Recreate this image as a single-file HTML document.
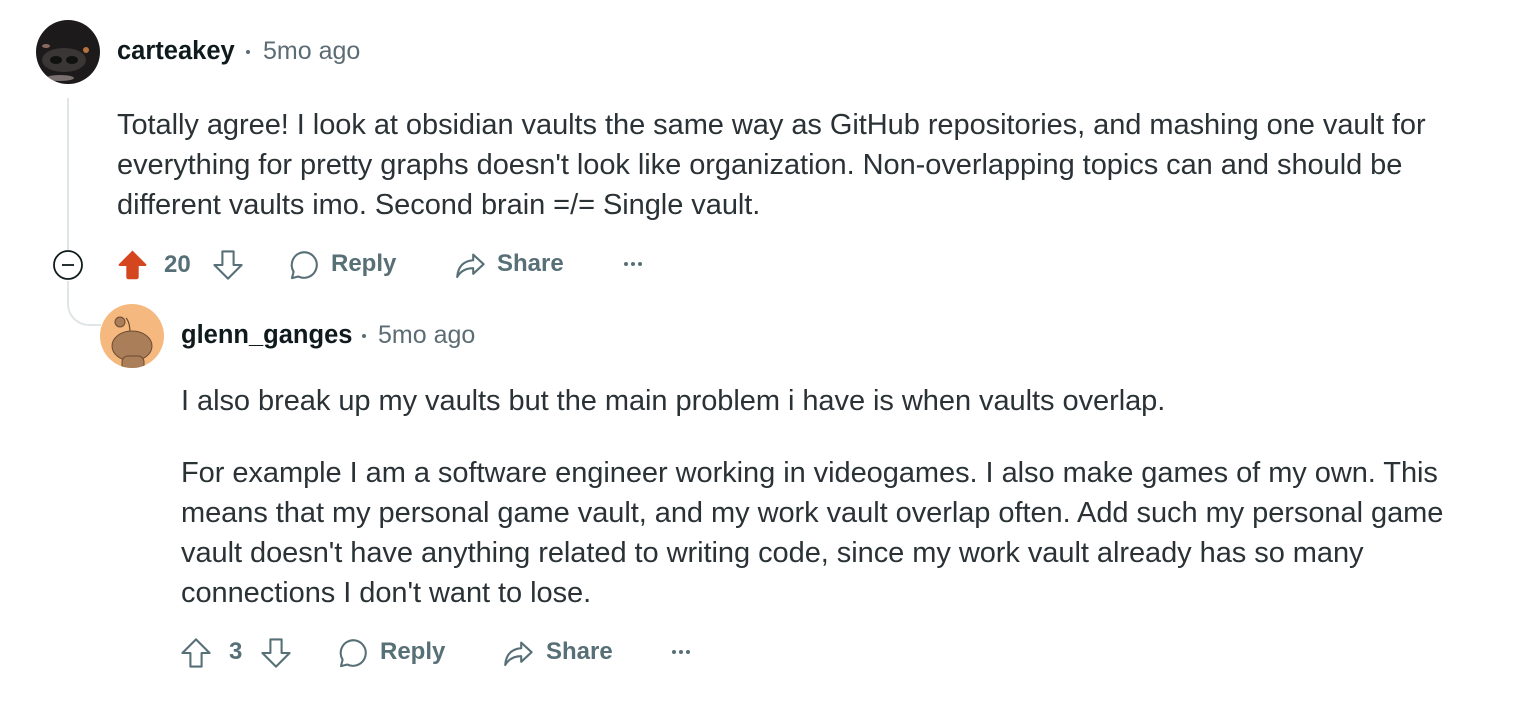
<!DOCTYPE html>
<html><head><meta charset="utf-8"><style>
body{margin:0;width:1518px;height:724px;background:#fff;font-family:"Liberation Sans",Arial,sans-serif;position:relative;overflow:hidden}
.a{position:absolute;white-space:nowrap}
.name{font-weight:bold;font-size:25.5px;color:#0f1a1c}
.meta{font-size:25px;color:#5c6c74}
.dot{position:absolute;width:4px;height:4px;border-radius:2px;background:#5c6c74}
.txt{font-size:29px;color:#2a3236;line-height:40px;letter-spacing:-0.05px}
.act{font-size:24px;font-weight:bold;color:#576f76}
.dots{position:absolute;width:20px;height:4px}
.dots i{position:absolute;top:0;width:4px;height:4px;border-radius:2px;background:#576f76}
svg.i{position:absolute}
</style></head><body>
<div class="a" style="left:67px;top:98px;width:2px;height:152px;background:#e0e5e7"></div>
<div class="a" style="left:67px;top:281px;width:34px;height:45px;border-left:2px solid #e0e5e7;border-bottom:2px solid #e0e5e7;border-bottom-left-radius:22px;box-sizing:border-box"></div>
<svg class="i" style="left:52px;top:249px" width="32" height="32" viewBox="0 0 32 32"><circle cx="16" cy="16" r="14" fill="#fff" stroke="#0f1a1c" stroke-width="1.8"/><line x1="10" y1="16" x2="22" y2="16" stroke="#0f1a1c" stroke-width="1.8"/></svg>

<svg class="i" style="left:36px;top:20px" width="64" height="64" viewBox="0 0 64 64"><defs><clipPath id="c1"><circle cx="32" cy="32" r="32"/></clipPath></defs><g clip-path="url(#c1)"><rect width="64" height="64" fill="#1c1a1a"/><ellipse cx="28" cy="40" rx="22" ry="12" fill="#3a3636"/><ellipse cx="20" cy="40" rx="6" ry="4" fill="#111"/><ellipse cx="36" cy="40" rx="6" ry="4" fill="#111"/><circle cx="50" cy="30" r="3" fill="#b57340"/><ellipse cx="10" cy="26" rx="4" ry="2" fill="#8a6a60"/><ellipse cx="24" cy="58" rx="14" ry="3" fill="#7a7070"/></g></svg>
<div class="a name" style="left:117px;top:37px">carteakey</div>
<div class="dot" style="left:246px;top:50px"></div>
<div class="a meta" style="left:263px;top:37px">5mo ago</div>
<div class="a txt" style="left:117px;top:105px">Totally agree! I look at obsidian vaults the same way as GitHub repositories, and mashing one vault for<br>everything for pretty graphs doesn't look like organization. Non-overlapping topics can and should be<br>different vaults imo. Second brain =/= Single vault.</div>

<svg class="i" style="left:117px;top:249px" width="31" height="31" viewBox="0 0 20 20"><path d="M10 1 L19 10 Q19 11 18 11 H14 V18 Q14 19.5 12.5 19.5 H7.5 Q6 19.5 6 18 V11 H2 Q1 11 1 10 Z" fill="#d4461e"/></svg>
<div class="a act" style="left:164px;top:251px">20</div>
<svg class="i" style="left:212px;top:249px" width="32" height="32" viewBox="0 0 20 20"><path d="M10 18.5 L18.5 10 H13.5 V1.5 H6.5 V10 H1.5 Z" fill="none" stroke="#576f76" stroke-width="1.3" stroke-linejoin="round"/></svg>
<svg class="i" style="left:288px;top:249px" width="32" height="32" viewBox="0 0 20 20"><path d="M10 2 A8 8 0 1 1 6.5 17.2 L2.5 18.2 L3.5 14.2 A8 8 0 0 1 10 2 Z" fill="none" stroke="#576f76" stroke-width="1.3" stroke-linejoin="round"/></svg>
<div class="a act" style="left:331px;top:250px">Reply</div>
<svg class="i" style="left:454px;top:249px" width="32" height="32" viewBox="0 0 20 20"><path d="M12 3.5 L18.5 9.5 L12 15.5 V12 C7 12 4 14 2 17.5 C2.5 11 6 7.5 12 7 Z" fill="none" stroke="#576f76" stroke-width="1.3" stroke-linejoin="round"/></svg>
<div class="a act" style="left:497px;top:250px">Share</div>
<div class="dots" style="left:624px;top:262px"><i style="left:0"></i><i style="left:7px"></i><i style="left:14px"></i></div>

<svg class="i" style="left:100px;top:304px" width="64" height="64" viewBox="0 0 64 64"><defs><clipPath id="c2"><circle cx="32" cy="32" r="32"/></clipPath></defs><g clip-path="url(#c2)"><rect width="64" height="64" fill="#f5b97f"/><path d="M30 30 Q30 18 26 14" stroke="#6b4a30" stroke-width="1.2" fill="none"/><circle cx="20" cy="18" r="5" fill="#a97e58" stroke="#6b4a30" stroke-width="1"/><ellipse cx="32" cy="42" rx="20" ry="15" fill="#a97e58" stroke="#6b4a30" stroke-width="1"/><rect x="22" y="52" width="22" height="16" rx="6" fill="#a97e58" stroke="#6b4a30" stroke-width="1"/></g></svg>
<div class="a name" style="left:181px;top:321px">glenn_ganges</div>
<div class="dot" style="left:362px;top:334px"></div>
<div class="a meta" style="left:378px;top:321px">5mo ago</div>
<div class="a txt" style="left:181px;top:381px">I also break up my vaults but the main problem i have is when vaults overlap.</div>
<div class="a txt" style="left:181px;top:453px">For example I am a software engineer working in videogames. I also make games of my own. This<br>means that my personal game vault, and my work vault overlap often. Add such my personal game<br>vault doesn't have anything related to writing code, since my work vault already has so many<br>connections I don't want to lose.</div>

<svg class="i" style="left:180px;top:637px" width="32" height="32" viewBox="0 0 20 20"><path d="M10 1.5 L18.5 10 H13.5 V18.5 H6.5 V10 H1.5 Z" fill="none" stroke="#576f76" stroke-width="1.3" stroke-linejoin="round"/></svg>
<div class="a act" style="left:229px;top:638px">3</div>
<svg class="i" style="left:260px;top:637px" width="32" height="32" viewBox="0 0 20 20"><path d="M10 18.5 L18.5 10 H13.5 V1.5 H6.5 V10 H1.5 Z" fill="none" stroke="#576f76" stroke-width="1.3" stroke-linejoin="round"/></svg>
<svg class="i" style="left:337px;top:637px" width="32" height="32" viewBox="0 0 20 20"><path d="M10 2 A8 8 0 1 1 6.5 17.2 L2.5 18.2 L3.5 14.2 A8 8 0 0 1 10 2 Z" fill="none" stroke="#576f76" stroke-width="1.3" stroke-linejoin="round"/></svg>
<div class="a act" style="left:380px;top:638px">Reply</div>
<svg class="i" style="left:502px;top:637px" width="32" height="32" viewBox="0 0 20 20"><path d="M12 3.5 L18.5 9.5 L12 15.5 V12 C7 12 4 14 2 17.5 C2.5 11 6 7.5 12 7 Z" fill="none" stroke="#576f76" stroke-width="1.3" stroke-linejoin="round"/></svg>
<div class="a act" style="left:546px;top:638px">Share</div>
<div class="dots" style="left:672px;top:650px"><i style="left:0"></i><i style="left:7px"></i><i style="left:14px"></i></div>
</body></html>
